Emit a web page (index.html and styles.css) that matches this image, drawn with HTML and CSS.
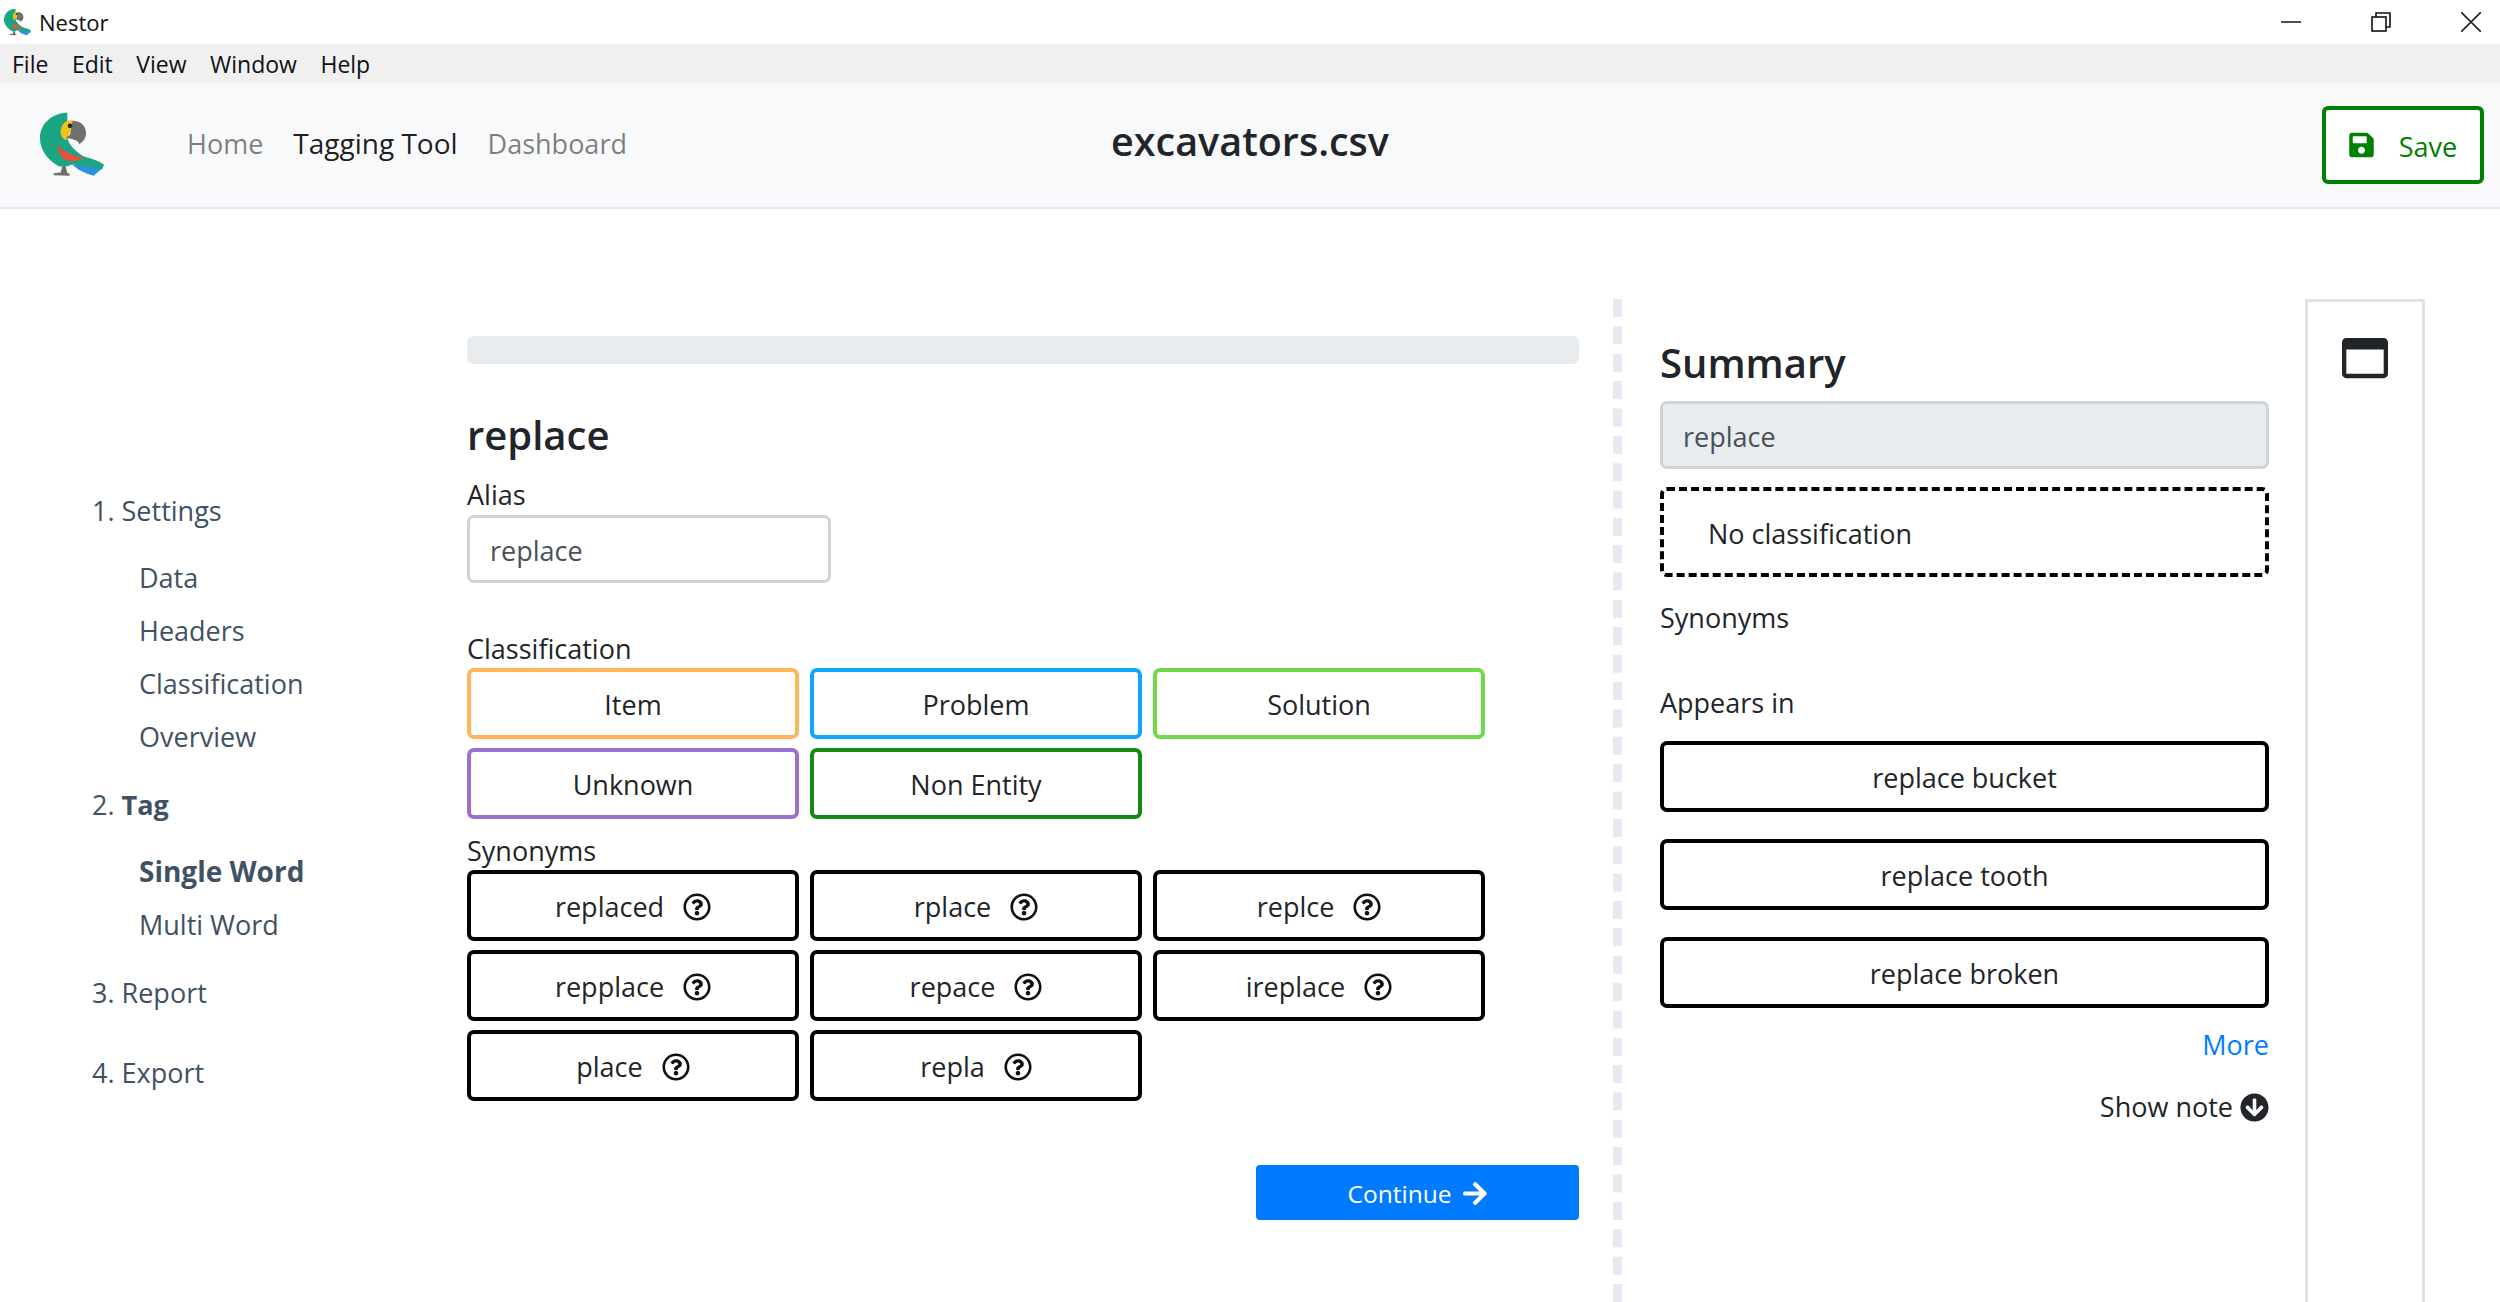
FILE: index.html
```html
<!DOCTYPE html>
<html lang="en">
<head>
  <meta charset="UTF-8" />
  <title>Nestor</title>
  <link rel="stylesheet" href="styles.css">
</head>
<body>
  <svg class="defs" width="0" height="0">
    <symbol id="parrot" viewBox="60 68 192 194">
      <path fill="#6f6f6f" d="M128 226l8 2 6 22 8 4-2 5-46-2-2-6 22-2z"/>
      <path fill="#2f8fe0" d="M155 224l58 4 34 8-26 23-20-6-26-13z"/>
      <path fill="#1aa583" d="M142 70c-44 0-82 32-82 76 0 36 24 66 56 84 20 4 34-2 42-6l88 16 6-14c-16-12-36-18-58-24-24-14-42-30-50-50l-2-18z"/>
      <path fill="#e8503c" d="M113 163c8 16 30 32 78 42-16 12-42 12-58 4-14-8-22-26-20-46z"/>
      <path fill="#6f6f6f" d="M112 163l14 20c-4 2-8-2-14-20z"/>
      <path fill="#f4c31a" d="M148 92c-14 2-26 16-26 34 0 12 6 22 16 26l8-14 18-44z"/>
      <path fill="#707070" d="M158 94c24 0 40 16 40 36 0 14-6 26-20 34-2-8-8-12-18-14l-22-6 12-8z"/>
      <circle cx="150" cy="109" r="7" fill="#12301f"/>
    </symbol>
    <symbol id="help" viewBox="0 0 512 512">
      <path d="M256 8C119 8 8 119.100 8 256c0 137 111 248 248 248s248-111 248-248C504 119.100 393 8 256 8zm0 448c-110.500 0-200-89.400-200-200 0-110.500 89.500-200 200-200 110.500 0 200 89.500 200 200 0 110.500-89.400 200-200 200zm107.200-255.200c0 67.100-72.400 68.100-72.400 92.900V300c0 6.600-5.400 12-12 12h-45.600c-6.600 0-12-5.400-12-12v-8.700c0-35.700 27.100-50 47.600-61.500 17.600-9.800 28.300-16.500 28.300-29.600 0-17.200-22-28.700-39.800-28.700-23.200 0-33.900 11-48.900 30-4.100 5.100-11.500 6.100-16.700 2.100l-27.800-21.100c-5.100-3.900-6.300-11.100-2.600-16.400C184.800 131.500 214.900 112 261.800 112c49.100 0 101.400 38.300 101.400 88.800zM298 368c0 23.200-18.800 42-42 42s-42-18.800-42-42 18.800-42 42-42 42 18.800 42 42z"/>
    </symbol>
  </svg>

  <div class="titlebar">
    <svg class="title-icon"><use href="#parrot"/></svg>
    <span class="title-text">Nestor</span>
    <div class="window-btns">
      <svg width="20" height="20" viewBox="0 0 20 20"><path d="M0 10h20" stroke="#222" stroke-width="1.600"/></svg>
      <svg width="20" height="20" viewBox="0 0 20 20" fill="none" stroke="#111" stroke-width="1.600"><rect x="1" y="5" width="14" height="14"/><path d="M5 5V1h14v14h-4"/></svg>
      <svg width="20" height="20" viewBox="0 0 20 20"><path d="M0 0l20 20M20 0L0 20" stroke="#222" stroke-width="1.600"/></svg>
    </div>
  </div>

  <div class="menubar">
    <span>File</span><span>Edit</span><span>View</span><span>Window</span><span>Help</span>
  </div>

  <header class="navbar">
    <svg class="logo"><use href="#parrot"/></svg>
    <nav class="nav-links">
      <a href="#">Home</a>
      <a href="#" class="active">Tagging Tool</a>
      <a href="#">Dashboard</a>
    </nav>
    <h1 class="file-name">excavators.csv</h1>
    <button class="save-btn">
      <svg viewBox="0 0 448 512"><path d="M433.900 129.900l-83.800-83.800A48 48 0 0 0 316.100 32H48C21.500 32 0 53.500 0 80v352c0 26.500 21.500 48 48 48h352c26.500 0 48-21.500 48-48V163.900a48 48 0 0 0-14.100-34zM224 416c-35.300 0-64-28.700-64-64s28.700-64 64-64 64 28.700 64 64-28.700 64-64 64zm96-304.500V212c0 6.600-5.400 12-12 12H76c-6.600 0-12-5.400-12-12V108c0-6.600 5.400-12 12-12h228.500c3.200 0 6.200 1.300 8.500 3.500l3.500 3.500a12 12 0 0 1 3.500 8.500z"/></svg>
      <span>Save</span>
    </button>
  </header>

  <div class="layout">
    <aside class="steps">
      <div class="step">1. Settings</div>
      <div class="sub-steps">
        <div>Data</div>
        <div>Headers</div>
        <div>Classification</div>
        <div>Overview</div>
      </div>
      <div class="step">2. <b>Tag</b></div>
      <div class="sub-steps">
        <div><b>Single Word</b></div>
        <div>Multi Word</div>
      </div>
      <div class="step">3. Report</div>
      <div class="step step-last">4. Export</div>
    </aside>

    <main class="tagger">
      <div class="progress"></div>
      <h2 class="word">replace</h2>
      <label class="field-label">Alias</label>
      <input class="text-input alias-input" type="text" value="replace">

      <label class="field-label class-label">Classification</label>
      <div class="btn-grid">
        <button class="tag-btn item">Item</button>
        <button class="tag-btn problem">Problem</button>
        <button class="tag-btn solution">Solution</button>
        <button class="tag-btn unknown">Unknown</button>
        <button class="tag-btn non-entity">Non Entity</button>
      </div>

      <label class="field-label syn-label">Synonyms</label>
      <div class="btn-grid">
        <button class="tag-btn">replaced <svg class="help"><use href="#help"/></svg></button>
        <button class="tag-btn">rplace <svg class="help"><use href="#help"/></svg></button>
        <button class="tag-btn">replce <svg class="help"><use href="#help"/></svg></button>
        <button class="tag-btn">repplace <svg class="help"><use href="#help"/></svg></button>
        <button class="tag-btn">repace <svg class="help"><use href="#help"/></svg></button>
        <button class="tag-btn">ireplace <svg class="help"><use href="#help"/></svg></button>
        <button class="tag-btn">place <svg class="help"><use href="#help"/></svg></button>
        <button class="tag-btn">repla <svg class="help"><use href="#help"/></svg></button>
      </div>

      <div class="continue-row">
        <button class="continue-btn">Continue
          <svg viewBox="0 0 448 512"><path d="M190.500 66.900l22.200-22.200c9.400-9.400 24.600-9.400 33.900 0L441 239c9.400 9.400 9.400 24.600 0 33.900L246.600 467.300c-9.400 9.400-24.600 9.400-33.900 0l-22.200-22.200c-9.500-9.500-9.300-25 .4-34.300L311.400 296H24c-13.300 0-24-10.700-24-24v-32c0-13.300 10.700-24 24-24h287.400L190.900 101.200c-9.800-9.300-10-24.800-.4-34.300z"/></svg>
        </button>
      </div>
    </main>

    <section class="summary">
      <h2 class="summary-title">Summary</h2>
      <input class="text-input summary-input" type="text" value="replace" disabled>
      <div class="no-class">No classification</div>
      <div class="summary-label">Synonyms</div>
      <div class="summary-label appears">Appears in</div>
      <button class="tag-btn wide">replace bucket</button>
      <button class="tag-btn wide">replace tooth</button>
      <button class="tag-btn wide">replace broken</button>
      <a href="#" class="more">More</a>
      <div class="show-note">Show note
        <svg viewBox="0 0 512 512"><path d="M504 256c0 137-111 248-248 248S8 393 8 256 119 8 256 8s248 111 248 248zm-143.600-28.900L288 302.600V120c0-13.300-10.700-24-24-24h-16c-13.300 0-24 10.700-24 24v182.600l-72.400-75.500c-9.300-9.700-24.800-9.900-34.300-.4l-10.900 11c-9.400 9.400-9.400 24.600 0 33.900L239 404.300c9.400 9.400 24.600 9.400 33.900 0l132.700-132.700c9.400-9.400 9.400-24.600 0-33.900l-10.900-10.900c-9.500-9.500-25-9.300-34.300.4z"/></svg>
      </div>
    </section>

    <div class="side-panel">
      <svg viewBox="0 0 512 512"><path d="M464 32H48C21.500 32 0 53.500 0 80v352c0 26.500 21.500 48 48 48h416c26.500 0 48-21.500 48-48V80c0-26.500-21.500-48-48-48zm-6 400H54a6 6 0 0 1-6-6V160h416v266a6 6 0 0 1-6 6z"/></svg>
    </div>
  </div>
</body>
</html>
```

FILE: styles.css
```css
*{margin:0;padding:0;box-sizing:border-box}
html,body{height:1302px;overflow:hidden}
body{font-family:"Open Sans","Noto Sans",sans-serif;font-size:27px;color:#212529;background:#fff}
.defs{position:absolute}

.titlebar{height:44px;display:flex;align-items:center;padding-left:4px;background:#fff}
.title-icon{width:27px;height:28px}
.title-text{font-size:22px;margin-left:8px;color:#111}
.window-btns{margin-left:auto;display:flex;gap:70px;padding-right:19px}

.menubar{height:39px;background:#f0f0f0;display:flex;align-items:center;padding-left:12px;gap:23.500px;font-size:23px;color:#111}

.navbar{height:126px;background:#f8f9fa;border-bottom:2px solid #e6e9f2;display:flex;align-items:center;padding:0 16px 0 40px;position:relative}
.logo{width:64px;height:65px;margin-top:-2px}
.nav-links{display:flex;gap:30px;margin:-3px 0 0 83px}
.nav-links a{color:rgba(0,0,0,.5);text-decoration:none;font-size:27px}
.nav-links a.active{color:rgba(0,0,0,.9);font-weight:500;font-size:28px;line-height:37px}
.file-name{position:absolute;left:0;right:0;top:33px;text-align:center;font-size:39.500px;font-weight:600;line-height:50px;pointer-events:none}
.save-btn{margin-left:auto;width:162px;height:78px;background:#fff;border:4px solid #008000;border-radius:6px;color:#008000;font:inherit;display:flex;align-items:center;justify-content:center;gap:24px}
.save-btn svg{width:25px;height:28px;fill:#008000}
.save-btn span{margin:2px 0 0 1px}

.layout{display:flex;height:1093px;padding-top:90px}

.steps{width:467px;padding:192px 0 0 92px;color:#3f5163;font-size:27px;line-height:40px}
.step{margin-bottom:27px}
.step-last{margin-top:40px}
.sub-steps{padding-left:47px;margin-bottom:28px;display:flex;flex-direction:column;gap:13px}
.sub-steps b{font-size:28px;line-height:1}

.tagger{width:1112px;padding-top:37px}
.progress{height:28px;background:#e9ecef;border-radius:6px}
.word{font-size:40px;font-weight:600;line-height:54px;margin-top:44px}
.field-label{display:block;line-height:38px;margin-top:14px}
.text-input{display:block;height:68px;border:3px solid #ced4da;border-radius:7px;padding:2px 20px 0;font:inherit;color:#495057;background:#fff}
.alias-input{width:364px;margin-top:1px}
.class-label{margin-top:47px}
.syn-label{margin-top:13px}

.btn-grid{display:grid;grid-template-columns:repeat(3,332px);gap:9px 11px}
.tag-btn{height:71px;padding-top:2px;background:#fff;border:4px solid #000;border-radius:7px;font:inherit;color:#212529;display:flex;align-items:center;justify-content:center;gap:19px}
.tag-btn.item{border-color:#ffb658}
.tag-btn.problem{border-color:#0ea5ff}
.tag-btn.solution{border-color:#70d94a}
.tag-btn.unknown{border-color:#9a6fd0}
.tag-btn.non-entity{border-color:#138a13}
.help{width:28px;height:28px;fill:#111}

.continue-row{display:flex;justify-content:flex-end;margin-top:64px}
.continue-btn{width:323px;height:55px;padding-top:1px;border:none;border-radius:4px;background:#007bff;color:#fff;font:inherit;font-size:24.500px;font-weight:500;display:flex;align-items:center;justify-content:center;gap:12px}
.continue-btn svg{width:24px;height:27px;fill:#fff}

.summary{margin-left:34px;border-left:9px dashed #e6e9f2;padding:37px 0 0 38px;width:656px}
.summary-title{font-size:40px;font-weight:600;line-height:54px;margin-bottom:11px}
.summary-input{width:609px;background:#e9ecef}
.no-class{width:609px;height:90px;margin-top:18px;padding:2px 0 0 44px;border:4px dashed #000;border-radius:7px;display:flex;align-items:center}
.summary-label{line-height:40px;margin-top:21px}
.appears{margin-top:45px}
.tag-btn.wide{width:609px;margin-top:27px}
.tag-btn.wide:first-of-type{margin-top:18px}
.more{display:block;width:609px;text-align:right;color:#007bff;text-decoration:none;margin-top:17px;line-height:40px}
.show-note{width:609px;display:flex;justify-content:flex-end;align-items:center;gap:7px;margin-top:22px;line-height:40px}
.show-note svg{width:29px;height:29px;fill:#212529}

.side-panel{width:120px;margin-left:36px;border:3px solid #dee2e6;border-bottom:none;display:flex;justify-content:center;align-items:flex-start;padding-top:33px}
.side-panel svg{width:46px;height:46px;fill:#212529}
```
